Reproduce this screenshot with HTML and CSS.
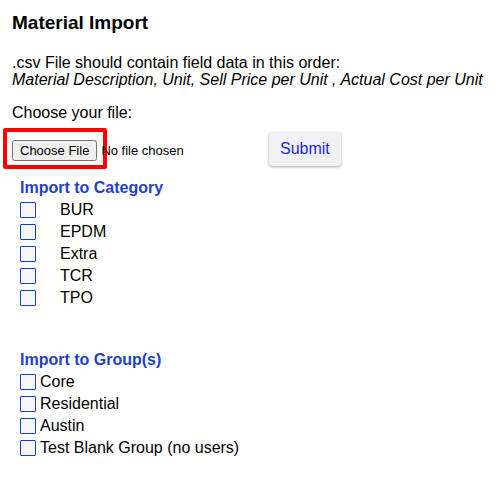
FILE: index.html
```html
<!DOCTYPE html>
<html lang="en">
<head>
  <meta charset="UTF-8">
  <title>Material Import</title>
  <link rel="stylesheet" href="styles.css">
</head>
<body>
  <div class="page">
    <h2 class="title">Material Import</h2>

    <p class="hint">
      .csv File should contain field data in this order:<br>
      <em>Material Description, Unit, Sell Price per Unit , Actual Cost per Unit</em>
    </p>

    <p class="choose">Choose your file:</p>

    <div class="upload-row">
      <div class="file-box">
        <input type="file" id="material-file">
      </div>
      <button class="submit" type="button">Submit</button>
    </div>

    <div class="group category">
      <h4>Import to Category</h4>
      <label class="option"><input type="checkbox"><span>BUR</span></label>
      <label class="option"><input type="checkbox"><span>EPDM</span></label>
      <label class="option"><input type="checkbox"><span>Extra</span></label>
      <label class="option"><input type="checkbox"><span>TCR</span></label>
      <label class="option"><input type="checkbox"><span>TPO</span></label>
    </div>

    <div class="group groups">
      <h4>Import to Group(s)</h4>
      <label class="option"><input type="checkbox"><span>Core</span></label>
      <label class="option"><input type="checkbox"><span>Residential</span></label>
      <label class="option"><input type="checkbox"><span>Austin</span></label>
      <label class="option"><input type="checkbox"><span>Test Blank Group (no users)</span></label>
    </div>
  </div>
</body>
</html>
```

FILE: styles.css
```css
body {
  margin: 0;
  font-family: "Liberation Sans", Arial, sans-serif;
  font-size: 16px;
  color: #000;
  background: #fff;
}

.page {
  padding: 12px 12px 20px 12px;
}

.title {
  margin: 0 0 21px 0;
  font-size: 19px;
  font-weight: bold;
  line-height: 21px;
}

.hint {
  margin: 0 0 16px 0;
  line-height: 17px;
}

.choose {
  margin: 0 0 6px 0;
  line-height: 18px;
}

.upload-row {
  display: flex;
  align-items: center;
  margin-left: -9px;
}

/* highlighted file picker */
.file-box {
  display: flex;
  align-items: center;
  width: 104px;
  height: 41px;
  padding: 3px 5px 0 5px;
  border: 4px solid #ff0000;
  border-radius: 2px;
  box-sizing: border-box;
  white-space: nowrap;
}

.file-box input {
  font-family: "Liberation Sans", Arial, sans-serif;
  font-size: 13px;
}

.submit {
  margin-left: 162px;
  padding: 8px 11px;
  border: none;
  border-radius: 4px;
  background: #f0f0f5;
  color: #1b28d8;
  font-family: "Liberation Sans", Arial, sans-serif;
  font-size: 16px;
  box-shadow: 0 1px 3px rgba(0, 0, 0, 0.35);
  cursor: pointer;
}

.group {
  margin-left: 8px;
}

.group h4 {
  margin: 0;
  font-size: 16px;
  font-weight: bold;
  color: #1f3fcc;
  line-height: 22px;
}

.category {
  margin-top: 8px;
}

.groups {
  margin-top: 40px;
}

.option {
  display: flex;
  align-items: center;
  height: 22px;
}

.option input {
  appearance: none;
  -webkit-appearance: none;
  width: 16px;
  height: 16px;
  margin: 0;
  border: 1.5px solid #1c3fd0;
  border-radius: 1px;
  background: #f7f7fa;
  box-sizing: border-box;
}

.category .option span {
  margin-left: 24px;
}

.groups .option span {
  margin-left: 4px;
}
```
